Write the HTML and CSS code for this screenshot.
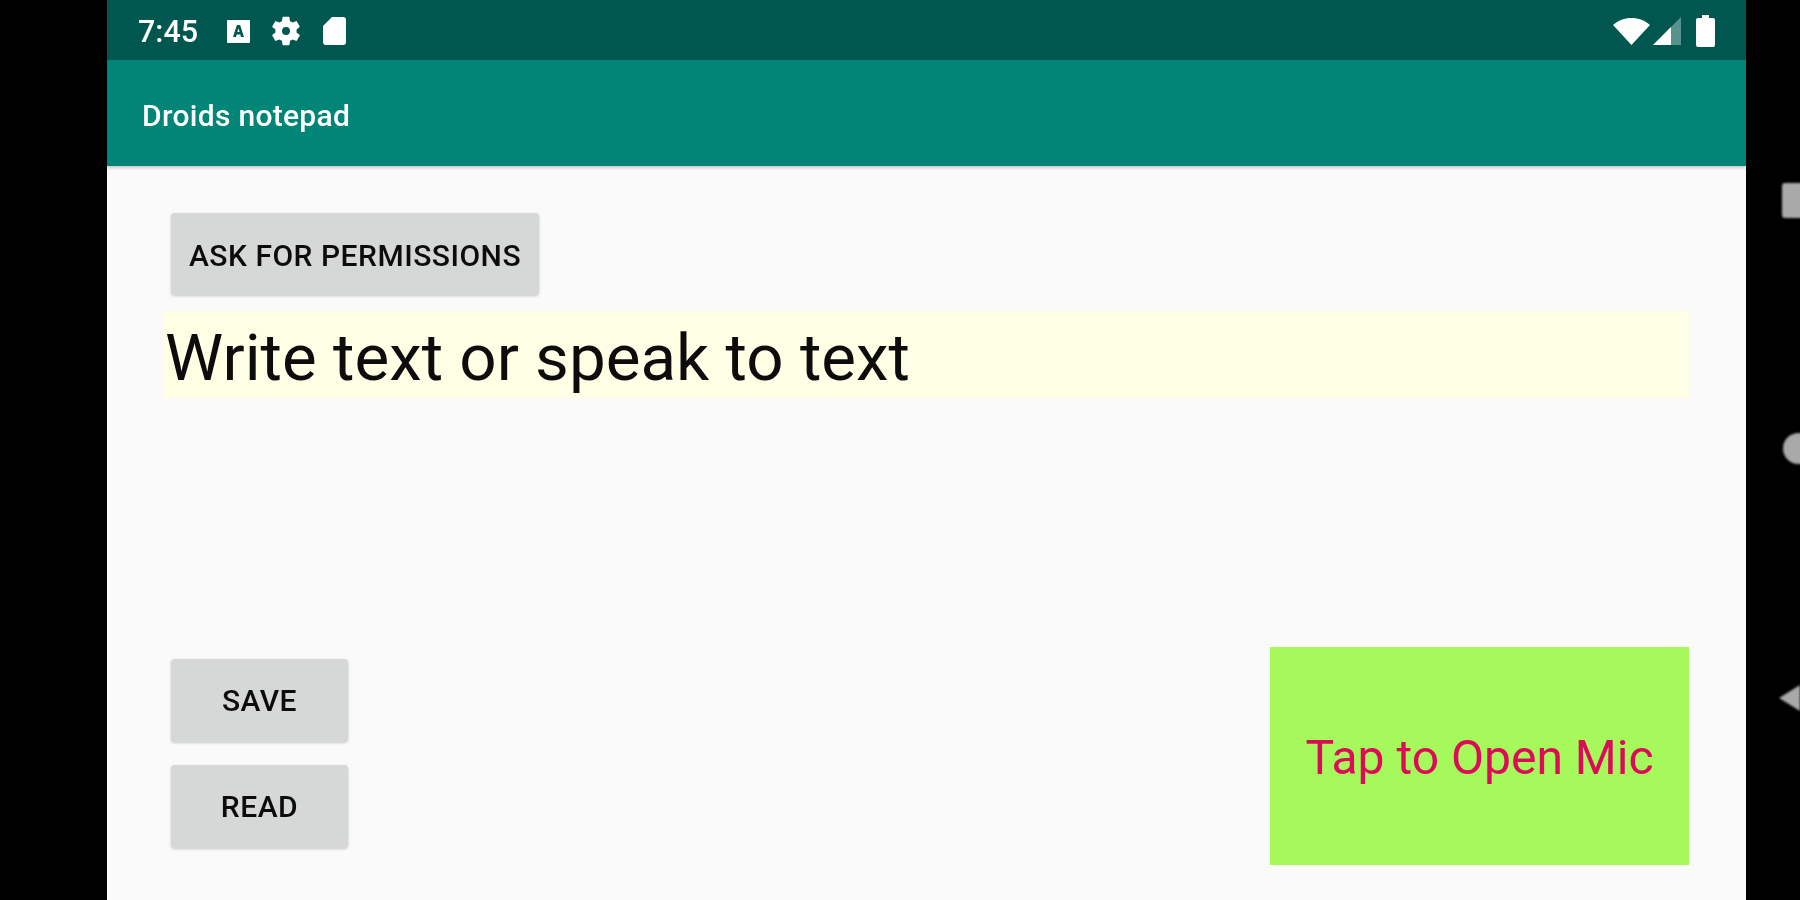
FILE: index.html
```html
<!DOCTYPE html>
<html lang="en">
<head>
    <meta charset="UTF-8">
    <title>Droids notepad</title>
    <link rel="stylesheet" href="styles.css">
</head>
<body>
    <div class="device">
        <div class="screen">
            <div class="status-bar">
                <div class="status-left">
                    <span class="clock">7:45</span>
                    <svg class="icon-a" viewBox="0 0 23 23"><path fill="#fff" fill-rule="evenodd" d="M1 0h21a1 1 0 0 1 1 1v21a1 1 0 0 1-1 1H1a1 1 0 0 1-1-1V1a1 1 0 0 1 1-1zM9.900 5 6 17h3l.7-2.500h3.600L14 17h3L13.100 5zM11.500 8.200l1.100 3.900h-2.200z"/></svg>
                    <svg class="icon-gear" viewBox="0 0 24 24"><path fill="#fff" fill-rule="evenodd" d="M19.400 13c.04-.32.1-.66.1-1s-.06-.68-.1-1l2.100-1.650c.2-.15.24-.42.12-.64l-2-3.460c-.12-.22-.4-.3-.6-.22l-2.500 1c-.52-.4-1.080-.73-1.700-.98l-.37-2.650A.5.500 0 0 0 14 2h-4a.5.500 0 0 0-.5.420l-.37 2.650c-.62.250-1.180.59-1.700.98l-2.500-1c-.22-.08-.48 0-.6.22l-2 3.460c-.13.220-.07.490.12.640L4.570 11c-.04.320-.07.660-.07 1s.03.680.07 1l-2.110 1.650c-.19.150-.25.420-.12.640l2 3.460c.12.220.38.300.6.220l2.500-1c.52.400 1.080.730 1.700.980l.37 2.650c.03.240.24.420.49.420h4c.25 0 .46-.18.49-.42l.37-2.650c.62-.25 1.180-.58 1.700-.98l2.500 1c.22.080.48 0 .6-.22l2-3.460c.12-.22.080-.49-.12-.64zM12 14.800a2.800 2.800 0 1 1 0-5.600 2.800 2.800 0 0 1 0 5.600z"/></svg>
                    <svg class="icon-sd" viewBox="0 0 23 28"><path fill="#fff" d="M9 0h11a3 3 0 0 1 3 3v22a3 3 0 0 1-3 3H3a3 3 0 0 1-3-3V9z"/></svg>
                </div>
                <div class="status-right">
                    <svg class="icon-wifi" viewBox="0 0 37 27"><path fill="#fff" d="M18.500 27 0 7C5 2.500 11.500 0 18.500 0S32 2.500 37 7z"/></svg>
                    <svg class="icon-signal" viewBox="0 0 28 28"><path fill="#fff" fill-opacity=".35" d="M28 0v28H0z"/><path fill="#fff" d="M18 10v18H0z"/></svg>
                    <svg class="icon-battery" viewBox="0 0 19 32"><path fill="#fff" d="M6 0h7v3h4a2 2 0 0 1 2 2v25a2 2 0 0 1-2 2H2a2 2 0 0 1-2-2V5a2 2 0 0 1 2-2h4z"/></svg>
                </div>
            </div>
            <div class="app-bar"><span class="app-title">Droids notepad</span></div>
            <div class="content">
                <button class="btn btn-wide" type="button">ASK FOR PERMISSIONS</button>
                <div class="note">Write text or speak to text</div>
                <div class="bottom-row">
                    <div class="file-btns">
                        <button class="btn btn-small" type="button">SAVE</button>
                        <button class="btn btn-small" type="button">READ</button>
                    </div>
                    <div class="mic-tile">Tap to Open Mic</div>
                </div>
            </div>
        </div>
        <div class="nav-rail">
            <div class="nav-square"></div>
            <div class="nav-circle"></div>
            <div class="nav-back"></div>
        </div>
    </div>
</body>
</html>
```

FILE: styles.css
```css
html, body {
    margin: 0;
    padding: 0;
    background-color: #000;
    overflow: hidden;
}

.device {
    display: flex;
    height: 900px;
    padding-left: 107px;
    font-family: Roboto, "Liberation Sans", sans-serif;
}

.screen {
    width: 1639px;
    height: 900px;
    display: flex;
    flex-direction: column;
    background-color: #fafafb;
}

.status-bar {
    height: 58px;
    padding-top: 2px;
    flex-shrink: 0;
    display: flex;
    justify-content: space-between;
    align-items: center;
    background-color: #00574f;
    color: #fff;
}

.status-left {
    display: flex;
    align-items: center;
    padding-left: 31px;
    filter: blur(0.7px);
}

.clock {
    font-size: 30.500px;
    font-weight: 500;
    width: 89px;
}

.icon-a {
    width: 23px;
    height: 23px;
    margin-right: 22px;
}

.icon-gear {
    width: 34px;
    height: 34px;
    margin-left: -3px;
    margin-right: 20px;
}

.icon-sd {
    width: 23px;
    height: 28px;
}

.status-right {
    display: flex;
    align-items: center;
    padding-right: 31px;
    filter: blur(0.7px);
}

.icon-wifi {
    width: 37px;
    height: 27px;
    margin-right: 3px;
}

.icon-signal {
    width: 28px;
    height: 28px;
    margin-right: 15px;
}

.icon-battery {
    width: 19px;
    height: 32px;
}

.app-bar {
    height: 102px;
    padding: 4px 0 0 35px;
    flex-shrink: 0;
    display: flex;
    align-items: center;
    background-color: #008577;
    font-size: 30px;
    font-weight: 500;
    letter-spacing: 0.3px;
    box-shadow: 0 2px 3px rgba(0, 0, 0, 0.2);
}

.app-title {
    color: #fff;
    filter: blur(0.6px);
}

.content {
    flex: 1;
    display: flex;
    flex-direction: column;
    align-items: flex-start;
    padding: 47px 57px 35px 57px;
}

.btn {
    display: block;
    height: 82px;
    margin: 0 0 0 7px;
    padding: 2px 0 0;
    border: none;
    border-radius: 4px;
    background-color: #d6d7d7;
    color: #0c0c0c;
    font-family: Roboto, "Liberation Sans", sans-serif;
    font-size: 30px;
    font-weight: 500;
    letter-spacing: 0.500px;
    box-shadow: 0 1px 3px rgba(0, 0, 0, 0.2);
    filter: blur(0.6px);
}

.btn-wide {
    width: 368px;
}

.btn-small {
    width: 177px;
    height: 83px;
    padding-top: 0;
}

.note {
    align-self: stretch;
    height: 87px;
    margin-top: 16px;
    padding-left: 1px;
    background-color: #ffffe6;
    color: #0c0c0c;
    font-size: 65.500px;
    line-height: 94px;
    filter: blur(0.6px);
}

.bottom-row {
    align-self: stretch;
    margin-top: auto;
    display: flex;
    justify-content: space-between;
    align-items: flex-end;
}

.file-btns {
    display: flex;
    flex-direction: column;
    gap: 23px;
    padding-bottom: 17px;
}

.mic-tile {
    width: 419px;
    height: 218px;
    padding-top: 2px;
    box-sizing: border-box;
    display: flex;
    align-items: center;
    justify-content: center;
    background-color: #a6f95a;
    color: #dc0a58;
    font-size: 48px;
    filter: blur(0.5px);
}

.nav-rail {
    flex: 1;
    position: relative;
    overflow: hidden;
}

.nav-square {
    position: absolute;
    left: 36px;
    top: 183px;
    width: 30px;
    height: 35px;
    border-radius: 3px;
    background-color: #a9a9a9;
    filter: blur(0.8px);
}

.nav-circle {
    position: absolute;
    left: 37px;
    top: 433px;
    width: 31px;
    height: 31px;
    border-radius: 50%;
    background-color: #a9a9a9;
    filter: blur(0.8px);
}

.nav-back {
    position: absolute;
    left: 33px;
    top: 685px;
    border-top: 13px solid transparent;
    border-bottom: 13px solid transparent;
    border-right: 21px solid #a9a9a9;
    filter: blur(0.8px);
}
```
